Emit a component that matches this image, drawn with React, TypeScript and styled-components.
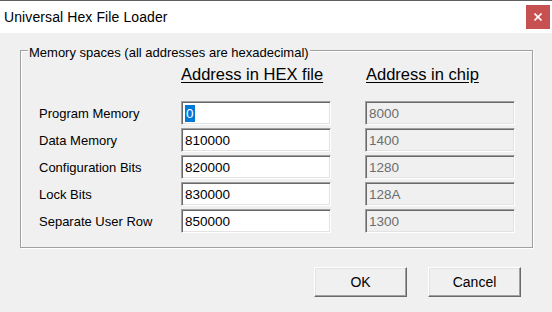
import React from 'react';
import styled, { createGlobalStyle } from 'styled-components';

const GlobalStyle = createGlobalStyle`
  html, body {
    margin: 0;
    padding: 0;
    background: #f0f0f0;
  }
  body {
    font-family: 'Liberation Sans', Arial, sans-serif;
  }
`;

const Window = styled.div`
  width: 552px;
  height: 312px;
  background: #f0f0f0;
  display: flex;
  flex-direction: column;
  overflow: hidden;
`;

const TitleBar = styled.div`
  height: 32px;
  border-top: 1px solid #5f5f5f;
  background: #ffffff;
  display: flex;
  align-items: center;
  justify-content: space-between;
  padding: 0 2px 0 4px;
`;

const Title = styled.span`
  font-size: 14px;
  color: #000;
  letter-spacing: 0.1px;
`;

const CloseButton = styled.div`
  width: 24px;
  height: 24px;
  margin-top: -1px;
  background: #c75050;
  display: flex;
  align-items: center;
  justify-content: center;
`;

const Body = styled.div`
  display: flex;
  flex-direction: column;
  padding: 17px 19px 0 20px;
`;

const GroupBox = styled.div`
  position: relative;
  height: 198px;
  box-sizing: border-box;
  border: 1px solid #a0a0a0;
  box-shadow: inset 1px 1px 0 #ffffff, 1px 1px 0 #ffffff;
  padding: 14px 0 0 18px;
`;

const Legend = styled.span`
  position: absolute;
  top: -6px;
  left: 7px;
  padding: 0 1px;
  background: #f0f0f0;
  font-size: 13px;
  line-height: 15px;
  color: #000;
`;

const Grid = styled.div`
  display: grid;
  grid-template-columns: 108px 150px 150px;
  grid-template-rows: 33px repeat(5, 24px);
  column-gap: 34px;
  row-gap: 3px;
`;

const ColumnHeader = styled.div<{ $indent?: number }>`
  font-size: 16.5px;
  line-height: 19px;
  color: #000;
  text-decoration: underline;
  text-underline-offset: 2px;
  padding-left: ${(p) => p.$indent || 0}px;
`;

const Label = styled.div`
  font-size: 13px;
  color: #000;
  display: flex;
  align-items: center;
  white-space: nowrap;
`;

const Field = styled.div<{ $disabled?: boolean }>`
  box-sizing: border-box;
  height: 24px;
  border: 1px solid;
  border-color: #a0a0a0 #ffffff #ffffff #a0a0a0;
  box-shadow: inset 1px 1px 0 #696969, inset -1px -1px 0 #e3e3e3;
  background: ${(p) => (p.$disabled ? '#f0f0f0' : '#ffffff')};
  color: ${(p) => (p.$disabled ? '#6d6d6d' : '#000000')};
  font-size: 13.5px;
  display: flex;
  align-items: center;
  padding-left: 3px;
`;

const Selected = styled.span`
  background: #0078d7;
  color: #ffffff;
  line-height: 17px;
  padding: 0 1px;
`;

const ButtonRow = styled.div`
  display: flex;
  justify-content: flex-end;
  gap: 21px;
  padding: 19px 12px 0 0;
`;

const Button = styled.div`
  width: 93px;
  height: 30px;
  box-sizing: border-box;
  border: 1px solid;
  border-color: #ffffff #696969 #696969 #ffffff;
  box-shadow: inset -1px -1px 0 #a0a0a0, inset 1px 1px 0 #e3e3e3;
  background: #f0f0f0;
  font-size: 14px;
  color: #000;
  display: flex;
  align-items: center;
  justify-content: center;
`;

const rows = [
  { label: 'Program Memory', hex: '0', chip: '8000' },
  { label: 'Data Memory', hex: '810000', chip: '1400' },
  { label: 'Configuration Bits', hex: '820000', chip: '1280' },
  { label: 'Lock Bits', hex: '830000', chip: '128A' },
  { label: 'Separate User Row', hex: '850000', chip: '1300' },
];

const App = () => {
  return (
    <Window>
      <GlobalStyle />
      <TitleBar>
        <Title>Universal Hex File Loader</Title>
        <CloseButton>
          <svg width="8" height="8" viewBox="0 0 8 8">
            <path d="M0.5 0.5 L7.5 7.5 M7.5 0.5 L0.5 7.5" stroke="#fff" strokeWidth="1.6" />
          </svg>
        </CloseButton>
      </TitleBar>
      <Body>
        <GroupBox>
          <Legend>Memory spaces (all addresses are hexadecimal)</Legend>
          <Grid>
            <div />
            <ColumnHeader>Address in HEX file</ColumnHeader>
            <ColumnHeader $indent={1}>Address in chip</ColumnHeader>
            {rows.map((row, i) => (
              <React.Fragment key={row.label}>
                <Label>{row.label}</Label>
                <Field>{i === 0 ? <Selected>{row.hex}</Selected> : row.hex}</Field>
                <Field $disabled>{row.chip}</Field>
              </React.Fragment>
            ))}
          </Grid>
        </GroupBox>
        <ButtonRow>
          <Button>OK</Button>
          <Button>Cancel</Button>
        </ButtonRow>
      </Body>
    </Window>
  );
};

export default App;
